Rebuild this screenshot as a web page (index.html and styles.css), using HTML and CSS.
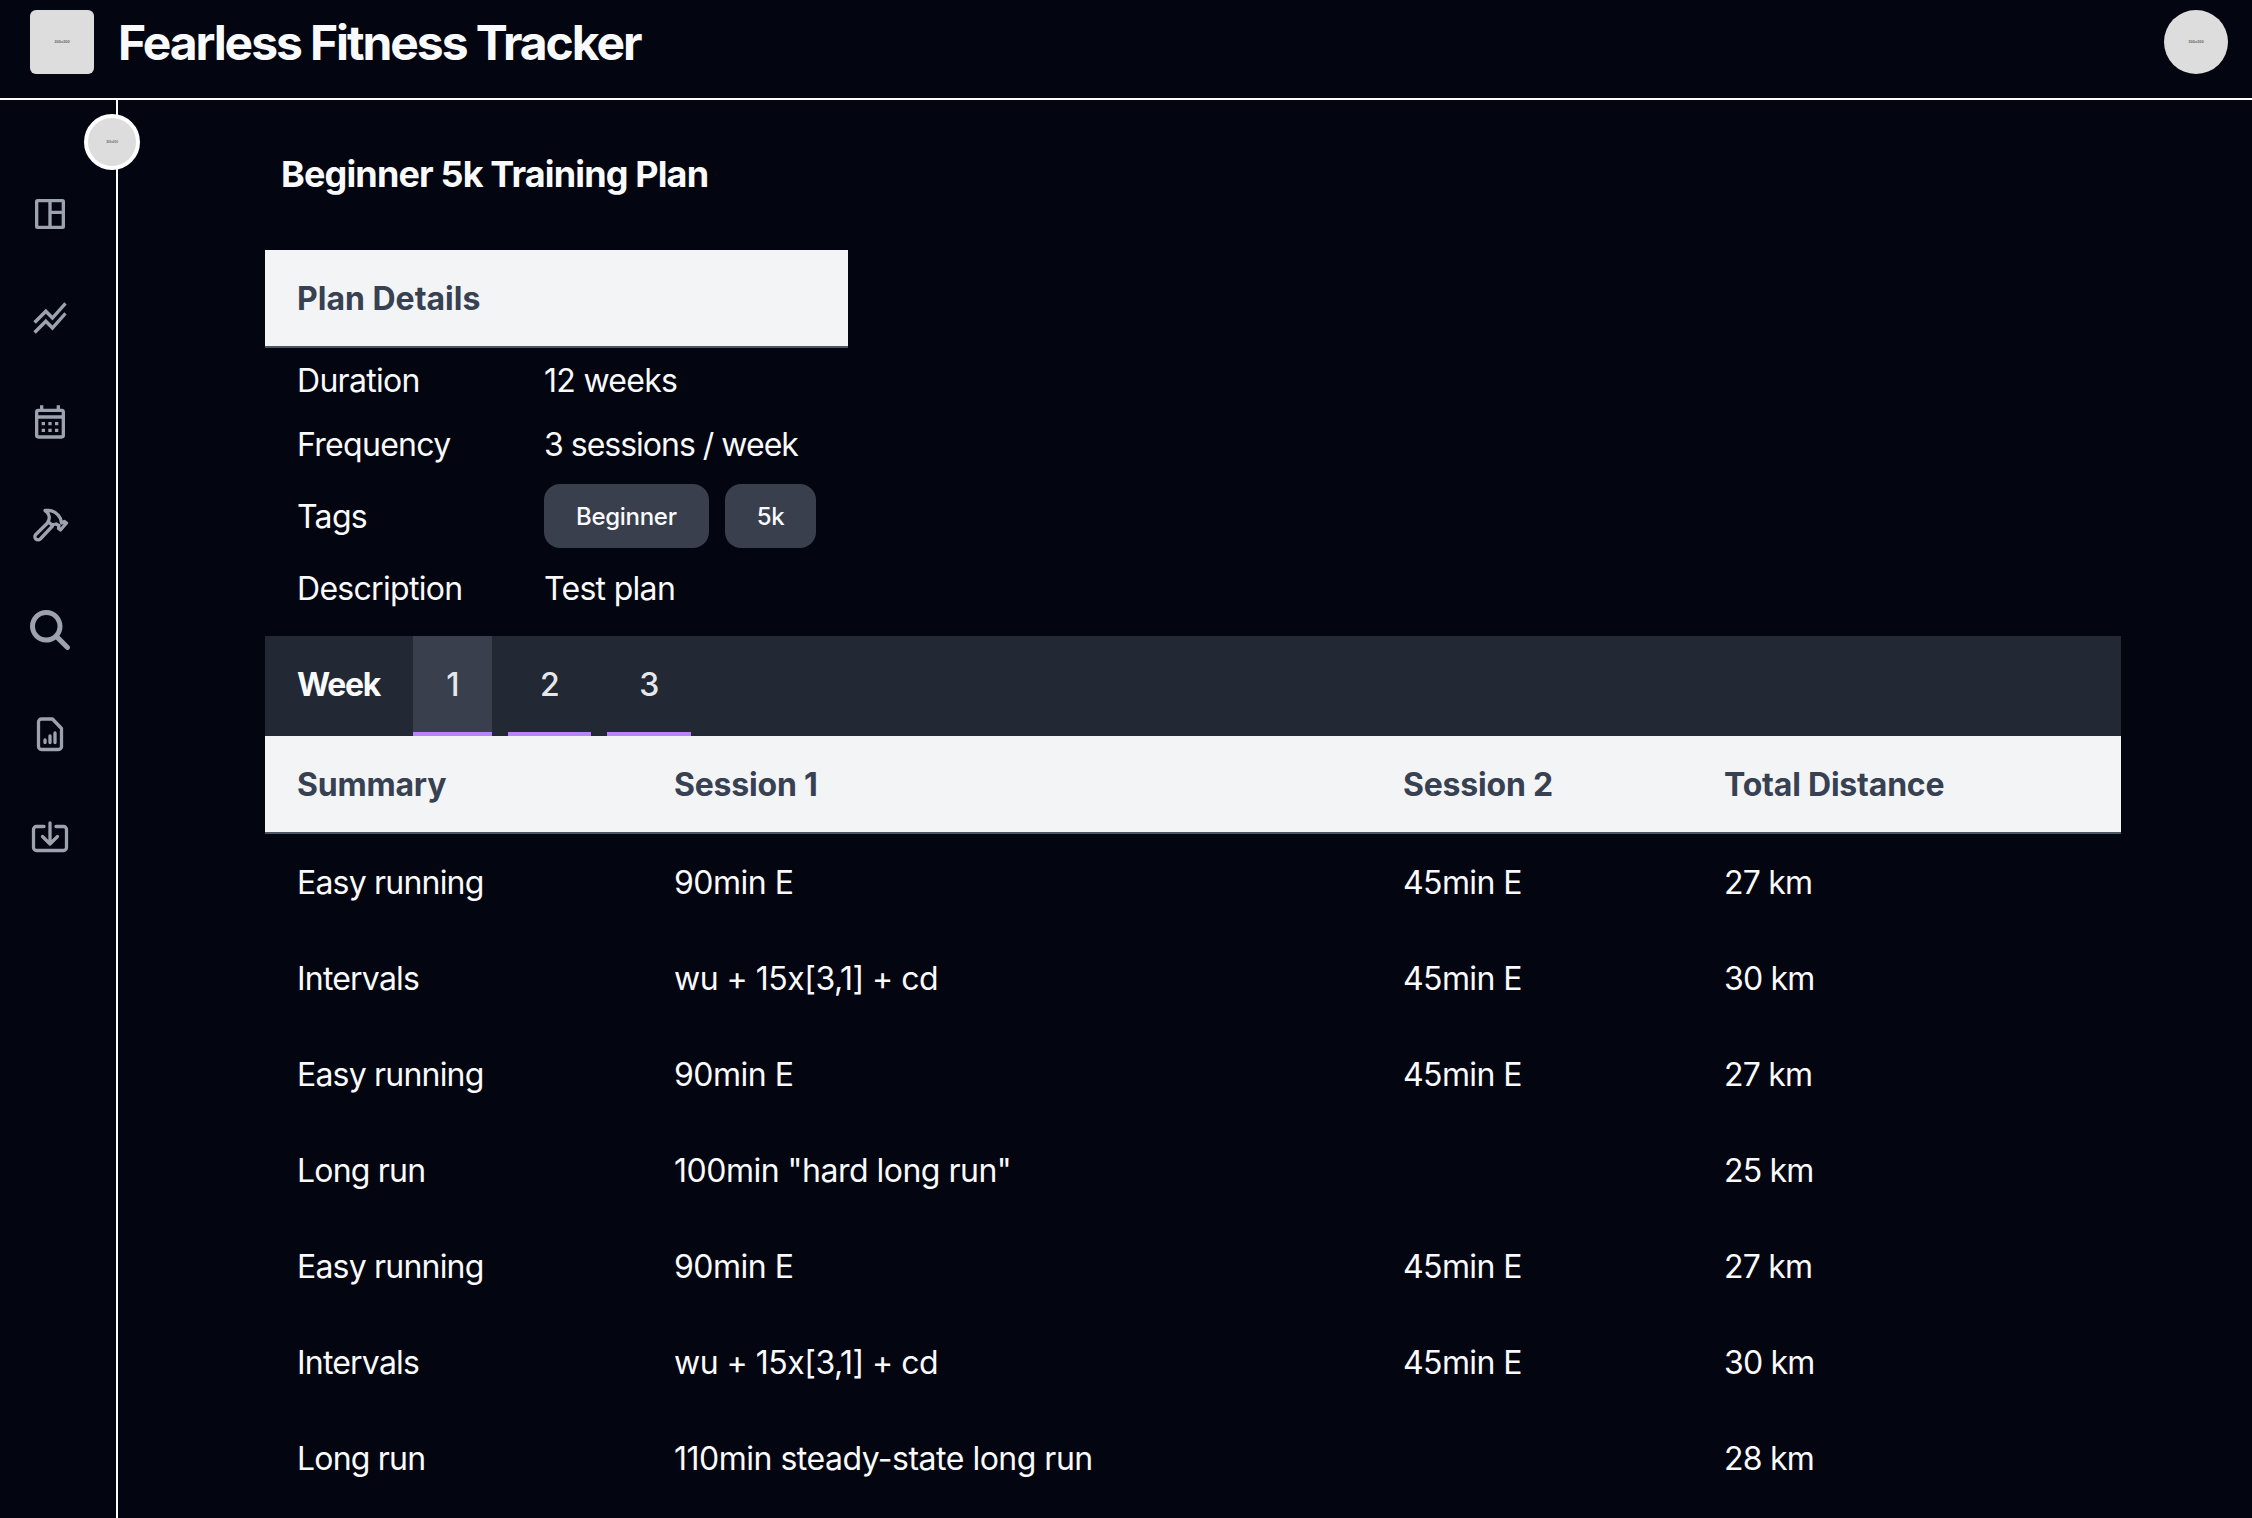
FILE: index.html
```
<!DOCTYPE html>
<html lang="en">
<head>
<meta charset="utf-8">
<title>Fearless Fitness Tracker</title>
<link rel="stylesheet" href="styles.css">
</head>
<body>
<header class="topbar">
  <div class="logo">300x300</div>
  <h1 class="brand">Fearless Fitness Tracker</h1>
  <div class="avatar">300x300</div>
</header>
<div class="shell">
  <nav class="sidebar">
    <button class="toggle">300x300</button>
    <svg class="icon" viewBox="0 0 24 24"><path fill-rule="evenodd" d="M4.500 3h15A1.500 1.500 0 0 1 21 4.500v15a1.500 1.500 0 0 1-1.500 1.500h-15A1.500 1.500 0 0 1 3 19.500v-15A1.500 1.500 0 0 1 4.500 3zM5 5v14h6V5zM13 5v5h6V5zM13 12v7h6v-7z"/></svg>
    <svg class="icon" viewBox="0 0 24 24"><path d="M2 19.990l7.500-7.510 4 4 7.090-7.970L22 9.920l-8.500 9.560-4-4-6 6.010-1.500-1.500zm1.500-4.500l6-6.010 4 4L22 3.920l-1.410-1.410-7.090 7.970-4-4L2 13.990l1.500 1.500z"/></svg>
    <svg class="icon" viewBox="0 0 24 24"><path fill-rule="evenodd" d="M19 4h-1V2h-2v2H8V2H6v2H5a2 2 0 0 0-2 2v14a2 2 0 0 0 2 2h14a2 2 0 0 0 2-2V6a2 2 0 0 0-2-2zM5 6v2h14V6zM5 10v10h14V10zM7 12h2v2H7zM11 12h2v2h-2zM15 12h2v2h-2zM7 16h2v2H7zM11 16h2v2h-2zM15 16h2v2h-2z"/></svg>
    <svg class="icon line" viewBox="0 0 40 40"><path d="M15 4.500c7-1 12.500 2.500 15.500 8l1 4.500 3-1.500L36.500 17l-6 7-2-1.500.5-3-3-1.500-4 1-4-3.500c2.500-3.500 1-8.500-3-11zM18.500 16 5.800 28.500a3 3 0 0 0 4.500 4.500L22.500 20"/></svg>
    <svg class="icon" viewBox="0 0 512 512"><path d="M416 208c0 45.900-14.900 88.300-40 122.700L502.600 457.400c12.500 12.500 12.500 32.800 0 45.300s-32.800 12.500-45.300 0L330.700 376c-34.400 25.200-76.800 40-122.700 40C93.100 416 0 322.900 0 208S93.100 0 208 0S416 93.100 416 208zM208 352a144 144 0 1 0 0-288 144 144 0 1 0 0 288z"/></svg>
    <svg class="icon line" viewBox="0 0 40 40"><path d="M11.500 5h11L31.500 14.500v18a3 3 0 0 1-3 3h-17a3 3 0 0 1-3-3V8a3 3 0 0 1 3-3zM15 26v2.500M20 22v6.500M25 19v9.500"/></svg>
    <svg class="icon line" viewBox="0 0 40 40"><path d="M14 8.500H6.500a3 3 0 0 0-3 3v18a3 3 0 0 0 3 3h27a3 3 0 0 0 3-3v-18a3 3 0 0 0-3-3H26M20 5v21M12.500 18.500 20 26l7.500-7.500"/></svg>
  </nav>
  <main class="content">
    <h2 class="title">Beginner 5k Training Plan</h2>
    <section class="details">
      <h3 class="details-head">Plan Details</h3>
      <dl class="facts">
        <dt>Duration</dt><dd>12 weeks</dd>
        <dt>Frequency</dt><dd class="frequency">3 sessions / week</dd>
        <dt>Tags</dt><dd class="tags"><span class="tag">Beginner</span><span class="tag">5k</span></dd>
        <dt>Description</dt><dd>Test plan</dd>
      </dl>
    </section>
    <div class="weeks">
      <span class="weeks-label">Week</span>
      <button class="tab active">1</button>
      <button class="tab">2</button>
      <button class="tab">3</button>
    </div>
    <div class="plan">
      <div class="row head"><span>Summary</span><span>Session 1</span><span>Session 2</span><span>Total Distance</span></div>
      <div class="row"><span>Easy running</span><span>90min E</span><span>45min E</span><span>27 km</span></div>
      <div class="row"><span>Intervals</span><span>wu + 15x[3,1] + cd</span><span>45min E</span><span>30 km</span></div>
      <div class="row"><span>Easy running</span><span>90min E</span><span>45min E</span><span>27 km</span></div>
      <div class="row"><span>Long run</span><span>100min "hard long run"</span><span></span><span>25 km</span></div>
      <div class="row"><span>Easy running</span><span>90min E</span><span>45min E</span><span>27 km</span></div>
      <div class="row"><span>Intervals</span><span>wu + 15x[3,1] + cd</span><span>45min E</span><span>30 km</span></div>
      <div class="row"><span>Long run</span><span>110min steady-state long run</span><span></span><span>28 km</span></div>
    </div>
  </main>
</div>
</body>
</html>
```
FILE: styles.css
```
* { box-sizing: border-box; margin: 0; padding: 0; }
body { height: 1518px; overflow: hidden; background: #030510; color: #f9fafb; font: 400 32px/48px Inter, sans-serif; letter-spacing: -0.7px; }
button { border: 0; background: none; color: inherit; font: inherit; letter-spacing: inherit; }
.topbar { display: flex; height: 100px; padding: 10px 24px 0 30px; border-bottom: 2px solid #fff; }
.logo, .avatar, .toggle { display: flex; align-items: center; justify-content: center; flex: none; background: #ddd; color: #666; font: 700 4px/4px "Liberation Sans", sans-serif; letter-spacing: 0; }
.logo { width: 64px; height: 64px; border-radius: 6px; }
.avatar { width: 64px; height: 64px; margin-left: auto; border-radius: 50%; }
.brand { margin-left: 24px; font-size: 48px; font-weight: 700; line-height: 66px; letter-spacing: -2.08px; white-space: nowrap; }
.shell { display: flex; height: 1418px; }
.sidebar { position: relative; display: flex; flex-direction: column; gap: 64px; flex: none; width: 118px; padding: 94px 0 0 30px; border-right: 2px solid #fff; }
.toggle { position: absolute; top: 14px; right: -24px; width: 56px; height: 56px; border: 4px solid #fff; border-radius: 50%; font-size: 3px; }
.icon { display: block; width: 40px; height: 40px; fill: #9ca3af; }
.line { fill: none; stroke: #9ca3af; stroke-width: 3.3; stroke-linecap: round; stroke-linejoin: round; }
.content { width: 2003px; padding: 46px 0 0 147px; }
.title { height: 104px; padding-left: 16px; font-size: 36px; font-weight: 700; line-height: 56px; letter-spacing: -0.86px; }
.details { width: 583px; }
.details-head { height: 98px; padding: 1px 32px 0; background: #f3f4f6; border-bottom: 2px solid #4b5563; color: #374151; font-size: 32px; font-weight: 700; line-height: 96px; letter-spacing: 0; }
.facts { display: grid; grid-template-columns: 247px 1fr; grid-template-rows: 64px 64px 80px 64px; align-items: center; padding-left: 32px; margin-bottom: 16px; white-space: nowrap; }
.facts dt, .facts dd:not(.tags) { padding-top: 2px; }
.frequency { letter-spacing: -1px; }
.tags { display: flex; gap: 16px; }
.tag { height: 64px; padding: 0 32px; border-radius: 16px; background: #3a3f4e; font-size: 24px; font-weight: 500; line-height: 66px; letter-spacing: -0.3px; }
.weeks { display: flex; height: 100px; padding-left: 32px; background: #222834; }
.weeks-label { width: 116px; font-weight: 700; line-height: 98px; letter-spacing: -1.3px; }
.tab { width: 83px; height: 100px; margin-right: 16px; padding-top: 2px; border-bottom: 4px solid #b984f8; color: #e5e7eb; font-weight: 500; line-height: 94px; text-align: center; }
.tab:last-child { width: 84px; }
.active { width: 79px; background: #3a3f4e; }
.row { display: grid; grid-template-columns: 377px 729px 321px 1fr; height: 96px; padding-left: 32px; line-height: 98px; letter-spacing: -0.8px; white-space: nowrap; }
.row span:nth-child(2) { letter-spacing: -0.5px; }
.row span:nth-child(3) { letter-spacing: -0.6px; }
.head { height: 98px; background: #f3f4f6; border-bottom: 2px solid #4b5563; color: #374151; font-weight: 700; }
.row.head span { letter-spacing: -0.2px; }
```
